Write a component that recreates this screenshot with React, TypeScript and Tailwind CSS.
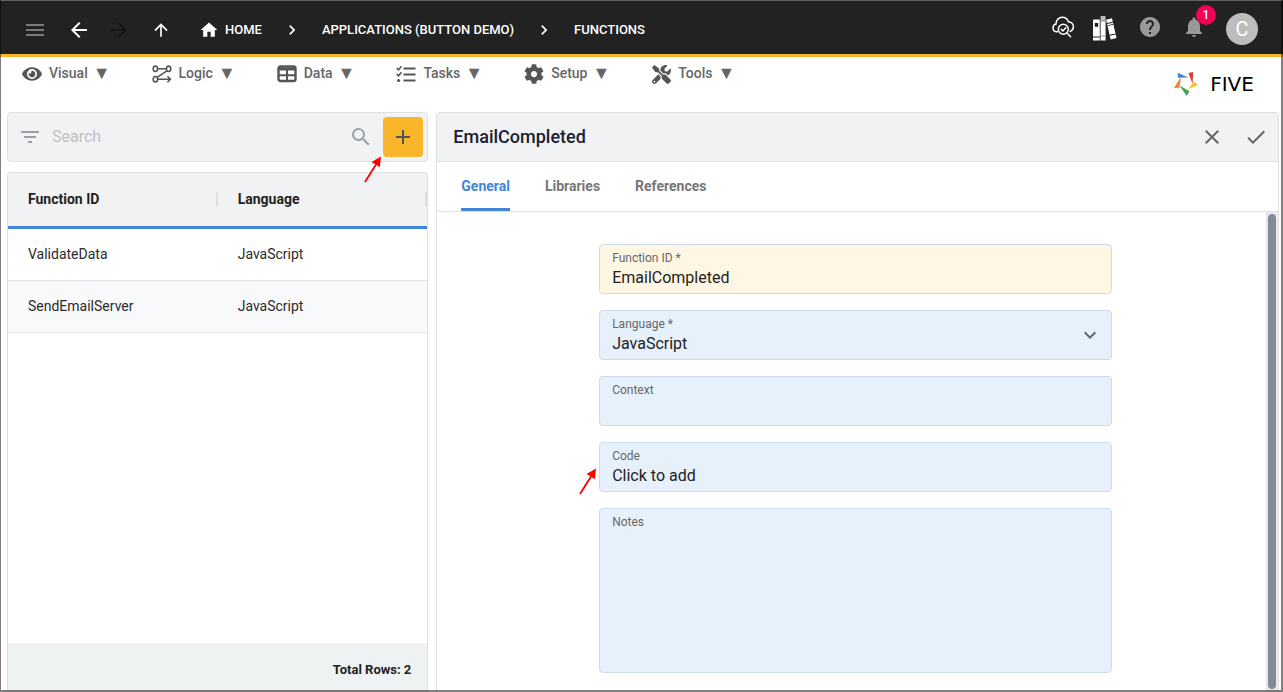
import type { ReactNode } from "react";
import {
  MdAdd,
  MdArrowBack,
  MdArrowForward,
  MdArrowUpward,
  MdCheck,
  MdChevronRight,
  MdClose,
  MdExpandMore,
  MdFilterList,
  MdHelp,
  MdHome,
  MdMenu,
  MdNotifications,
  MdSearch,
} from "react-icons/md";
import { FaCog, FaEye, FaTools } from "react-icons/fa";

function LogicIcon() {
  return (
    <svg width="20" height="18" viewBox="0 0 20 18" fill="none" stroke="#555" strokeWidth="1.6" aria-hidden="true">
      <ellipse cx="3.4" cy="3.8" rx="2.2" ry="2.7" />
      <ellipse cx="16.6" cy="3.8" rx="2.2" ry="2.7" />
      <ellipse cx="3.4" cy="14.2" rx="2.2" ry="2.7" />
      <path d="M5.6 3.8h8.8M14.9 5.8L5.2 12.4M5.6 14.2h12.4M15.4 11.2l3 3-3 3" />
    </svg>
  );
}

function TableIcon() {
  return (
    <svg width="20" height="18" viewBox="0 0 20 18" fill="none" stroke="#555" aria-hidden="true">
      <rect x="1.500" y="1.500" width="17" height="14.500" rx="2" strokeWidth="2.400" />
      <path d="M1.500 4h17" strokeWidth="3" />
      <path d="M1.500 10.300h17M10 4v12" strokeWidth="2" />
    </svg>
  );
}

function TasksIcon() {
  return (
    <svg width="20" height="18" viewBox="0 0 20 18" fill="none" stroke="#555" aria-hidden="true">
      <path d="M7.500 3.500h12M7.500 9.500h12M7.500 15.500h12" strokeWidth="2" />
      <path d="M.8 3.200l1.700 1.600L5.500 1.300M.8 9.200l1.700 1.600 3-3.500" strokeWidth="1.600" />
      <circle cx="2.600" cy="15.500" r="1.600" fill="#555" stroke="none" />
    </svg>
  );
}

function CloudSearchIcon() {
  return (
    <svg width="24" height="24" viewBox="0 0 24 24" fill="none" stroke="#fff" strokeWidth="1.5" strokeLinecap="round" aria-hidden="true">
      <path d="M6.600 16.800H5.400A4 4 0 0 1 2 12.900c0-2 1.300-3.400 3-3.800C4.800 5 7.700 2.300 11.200 2.300c3 0 5.300 1.700 6.200 4.400 2.900.2 5 2.300 5 5 0 2.200-1.300 4-3.200 4.700" />
      <circle cx="12.300" cy="14.300" r="5" />
      <path d="M16 18l3.600 3.700M10.200 14.300l1.600 1.600 3-3.200" />
    </svg>
  );
}

function BooksIcon() {
  return (
    <svg width="25" height="25" viewBox="0 0 25 25" aria-hidden="true">
      <path fill="#fff" d="M0 3.500h6.800v21H0z" />
      <path fill="#222" d="M1.800 7h3.400v3.800H1.800zM0 20.500h6.800v1H0z" />
      <path fill="#bbb" d="M7.600 0h5v4.600h-5z" />
      <path fill="#fff" d="M7.600 4.600h5v19.900h-5z" />
      <path fill="#999" d="M7.600 4.400h5v1h-5zM7.600 19.600h5v1h-5z" />
      <g transform="rotate(-13 14 4)">
        <path fill="#fff" d="M13.200 3.500h6v20.300h-6z" />
        <path fill="#222" d="M13.200 7h6v1h-6zM13.200 9.300h6v.8h-6zM13.200 19h6v1h-6z" />
      </g>
    </svg>
  );
}

function Pinwheel() {
  return (
    <svg width="24" height="24" viewBox="0 0 24 24" aria-hidden="true">
      <path fill="#4285d8" d="M3.700.8L14.400 5.400 3.900 5.800z" />
      <path fill="#e53935" d="M14.400.9L19.200 0 18.600 12z" />
      <path fill="#fbbc2c" d="M23.900 13.300L13.800 17 20.300 9.900z" />
      <path fill="#3fa652" d="M5.400 13.400L15.500 19.300 12.700 23.900z" />
      <path fill="#f58232" d="M6.900 4.800L5.500 15.700 0 15.900z" />
    </svg>
  );
}

function PointerArrow() {
  return (
    <svg width="18" height="27" viewBox="0 0 18 27" aria-hidden="true">
      <path d="M1 26L12 8.500" stroke="#f00" strokeWidth="1.800" />
      <path d="M17 .5L7.500 6l8.300 5.300z" fill="#f00" />
    </svg>
  );
}

const menus: { label: string; icon: ReactNode }[] = [
  { label: "Visual", icon: <FaEye className="h-[18px] w-5" /> },
  { label: "Logic", icon: <LogicIcon /> },
  { label: "Data", icon: <TableIcon /> },
  { label: "Tasks", icon: <TasksIcon /> },
  { label: "Setup", icon: <FaCog size={20} /> },
  { label: "Tools", icon: <FaTools size={19} /> },
];

const rows = [
  { id: "ValidateData", language: "JavaScript" },
  { id: "SendEmailServer", language: "JavaScript" },
];

function TopBar() {
  return (
    <header className="flex h-[57px] shrink-0 items-center justify-between border-t border-b-[3px] border-t-[#606161] border-b-[#f9b62b] bg-[#222] pt-1 pr-[25px] pl-[23px] text-white">
      <nav className="flex items-center text-[13px] font-medium" aria-label="Breadcrumb">
        <button type="button" aria-label="Menu" className="text-[#7a7a7a]"><MdMenu size={24} /></button>
        <button type="button" aria-label="Back" className="ml-5"><MdArrowBack size={24} /></button>
        <button type="button" aria-label="Forward" className="ml-4 text-[#161616]"><MdArrowForward size={24} /></button>
        <button type="button" aria-label="Up" className="ml-5"><MdArrowUpward size={20} /></button>
        <a href="#home" className="ml-7 flex items-center gap-1.5"><MdHome size={20} />HOME</a>
        <MdChevronRight size={20} className="mx-5" />
        <a href="#applications">APPLICATIONS (BUTTON DEMO)</a>
        <MdChevronRight size={20} className="mx-5" />
        <a href="#functions">FUNCTIONS</a>
      </nav>
      <div className="flex items-center pb-0.5">
        <button type="button" aria-label="Inspect" className="mr-[18px] mb-1"><CloudSearchIcon /></button>
        <button type="button" aria-label="Library" className="mr-5"><BooksIcon /></button>
        <button type="button" aria-label="Help" className="mr-5 mb-1 text-[#999]"><MdHelp size={24} /></button>
        <button type="button" aria-label="Notifications" className="relative mr-5 mb-1 text-[#999]">
          <MdNotifications size={24} />
          <span className="absolute -top-2.5 left-3.5 flex size-5 items-center justify-center rounded-full bg-[#f50057] text-xs font-medium text-white">1</span>
        </button>
        <button type="button" aria-label="Account" className="flex size-8 items-center justify-center rounded-full bg-[#bdbdbd] text-xl text-white">C</button>
      </div>
    </header>
  );
}

function MenuBar() {
  return (
    <div className="flex h-[55px] shrink-0 items-start justify-between pr-[22px] pl-[22px]">
      <nav className="flex gap-[41px] pt-1.5" aria-label="Main">
        {menus.map((menu) => (
          <button key={menu.label} type="button" className="flex h-5 items-center text-sm font-medium text-[#666]">
            <span className="mt-0.5 mr-[7px] flex w-5 justify-center text-[#555]">{menu.icon}</span>
            {menu.label}
            <span className="ml-[5px] text-lg leading-5 font-normal">▼</span>
          </button>
        ))}
      </nav>
      <a href="#five" className="mt-[15px] flex items-center gap-[5px] font-['DejaVu_Sans',sans-serif] text-xl leading-6 text-black">
        <Pinwheel />
        <span className="w-[58px] text-center">FIVE</span>
      </a>
    </div>
  );
}

function FunctionList() {
  return (
    <section className="flex min-h-0 min-w-0 flex-col gap-2.5">
      <div className="relative flex h-[50px] shrink-0 items-center rounded border border-[#dfe0e1] bg-[#f1f2f4] pr-1 pl-2.5">
        <button type="button" aria-label="Filter" className="text-[#9aa0a6]"><MdFilterList size={24} /></button>
        <input type="search" aria-label="Search" placeholder="Search" className="ml-2.5 min-w-0 flex-1 bg-transparent text-base text-[#222] outline-none placeholder:text-[#bfc1c4]" />
        <button type="button" aria-label="Run search" className="mr-2.5 text-[#9aa0a6]"><MdSearch size={24} /></button>
        <button type="button" aria-label="Add" className="flex size-10 items-center justify-center rounded bg-[#f9b62b] text-[#555]"><MdAdd size={24} /></button>
        <span className="absolute top-[43px] right-[45px]"><PointerArrow /></span>
      </div>
      <div className="flex min-h-0 flex-1 flex-col overflow-hidden rounded-t border border-b-0 border-[#dfe0e1]">
        <table className="w-full table-fixed border-separate border-spacing-0 text-left text-sm text-[#2b2b2b]">
          <thead className="bg-[#f1f2f4]">
            <tr>
              {["Function ID", "Language"].map((name) => (
                <th key={name} className="h-14 border-b-[3px] border-[#4285d8] p-0 pb-px font-bold text-[#222]">
                  <div className="flex h-3.5 items-center border-r-2 border-[#dcdee0] pl-5">{name}</div>
                </th>
              ))}
            </tr>
          </thead>
          <tbody>
            {rows.map((row) => (
              <tr key={row.id} className="even:bg-[#f8f9fb]">
                <td className="h-[52px] border-b border-[#e2e3e5] px-5 pt-0 pb-0.5">{row.id}</td>
                <td className="h-[52px] border-b border-[#e2e3e5] px-5 pt-0 pb-0.5">{row.language}</td>
              </tr>
            ))}
          </tbody>
        </table>
        <div className="mt-auto h-[49px] bg-[#eff2f3] pt-[17px] pr-4 text-right text-[13px] leading-5 font-bold text-[#222]">Total Rows: 2</div>
      </div>
    </section>
  );
}

const boxClass = "relative flex flex-col rounded border border-[#cbdcec] px-3 pt-[5px]";
const labelClass = "text-xs leading-4 text-[#666]";
const valueClass = "h-6 w-full appearance-none bg-transparent text-base leading-6 text-[#222] outline-none";

function FunctionForm() {
  return (
    <form className="flex w-full max-w-[513px] flex-col gap-4">
      <div className={`${boxClass} h-[50px] bg-[#fff6e4]`}>
        <label htmlFor="function-id" className={labelClass}>Function ID *</label>
        <input id="function-id" defaultValue="EmailCompleted" className={valueClass} />
      </div>
      <div className={`${boxClass} h-[50px] bg-[#e7f1fc]`}>
        <label htmlFor="language" className={labelClass}>Language *</label>
        <select id="language" defaultValue="JavaScript" className={valueClass}>
          <option>JavaScript</option>
          <option>TypeScript</option>
        </select>
        <MdExpandMore size={24} className="pointer-events-none absolute top-3 right-[9px] text-[#666]" />
      </div>
      <div className={`${boxClass} h-[50px] bg-[#e7f1fc]`}>
        <label htmlFor="context" className={labelClass}>Context</label>
        <input id="context" className={valueClass} />
      </div>
      <div className={`${boxClass} h-[50px] bg-[#e7f1fc]`}>
        <label htmlFor="code" className={labelClass}>Code</label>
        <input id="code" readOnly value="Click to add" className={valueClass} />
        <span className="absolute top-[25px] right-full mr-[3px]"><PointerArrow /></span>
      </div>
      <div className={`${boxClass} h-[165px] bg-[#e7f1fc]`}>
        <label htmlFor="notes" className={labelClass}>Notes</label>
        <textarea id="notes" className="w-full flex-1 resize-none bg-transparent text-base text-[#222] outline-none" />
      </div>
    </form>
  );
}

function FunctionDetail() {
  return (
    <section className="flex min-h-0 min-w-0 flex-col rounded-t border border-b-0 border-[#dfe0e1]">
      <div className="flex h-[49px] shrink-0 items-center justify-between border-b border-[#dfe0e1] bg-[#f1f2f4] pr-2.5 pl-4">
        <h1 className="text-lg font-medium text-[#1a2030]">EmailCompleted</h1>
        <div className="flex gap-5 text-[#666]">
          <button type="button" aria-label="Close"><MdClose size={24} /></button>
          <button type="button" aria-label="Save"><MdCheck size={24} /></button>
        </div>
      </div>
      <div role="tablist" className="flex h-[50px] shrink-0 gap-[35px] border-b border-[#dfe0e1] px-6 text-sm font-bold text-[#777]">
        <button type="button" role="tab" aria-selected="true" className="rounded-t-xs border-b-[3px] border-[#4285d8] pt-px text-[#4285d8]">General</button>
        <button type="button" role="tab" aria-selected="false" className="pb-0.5">Libraries</button>
        <button type="button" role="tab" aria-selected="false" className="pb-0.5">References</button>
      </div>
      <div className="flex min-h-0 flex-1">
        <div className="flex min-w-0 flex-1 items-start justify-center overflow-hidden pt-8 pl-2">
          <FunctionForm />
        </div>
        <div className="flex w-3 flex-col border-l border-[#e2e2e2] bg-[#ebebeb] px-px pt-0.5 pb-[3px]">
          <div className="w-2 flex-1 rounded-full bg-[#828a9c]" />
        </div>
      </div>
    </section>
  );
}

export default function App() {
  return (
    <div className="relative flex h-screen flex-col overflow-hidden bg-white font-[Roboto,sans-serif]">
      <TopBar />
      <MenuBar />
      <main className="grid min-h-0 flex-1 grid-cols-[1fr_2fr] gap-2 pr-1 pl-[7px]">
        <FunctionList />
        <FunctionDetail />
      </main>
      <div className="pointer-events-none absolute inset-0 border-r-2 border-b-2 border-l border-black/50" />
    </div>
  );
}
